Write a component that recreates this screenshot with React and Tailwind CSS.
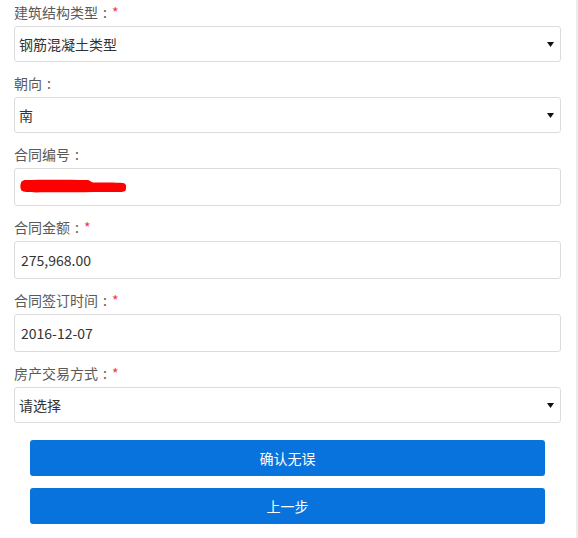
import React from "react";

const font = { fontFamily: '"Noto Sans CJK SC", "Noto Sans", sans-serif' };

function Label({ text, required }) {
  return (
    <div className="h-[20px] leading-[20px] text-[14px] text-[#5a5a5a] mb-[4px] whitespace-nowrap flex items-center">
      <span>{text}</span>
      <span className="inline-block w-[14px] text-center">:</span>
      {required && <span className="text-[#f5334f]">*</span>}
    </div>
  );
}

function Arrow() {
  return (
    <svg width="7" height="5" viewBox="0 0 7 5" className="shrink-0">
      <polygon points="0,0 7,0 3.5,5" fill="#111" />
    </svg>
  );
}

function SelectBox({ value }) {
  return (
    <div className="h-[36px] border border-[#dcdcdc] rounded-[3px] flex items-center pl-[4px] pr-[6px] text-[14px] text-[#333] bg-white">
      <span className="flex-1">{value}</span>
      <Arrow />
    </div>
  );
}

function InputBox({ children }) {
  return (
    <div className="h-[38px] border border-[#dcdcdc] rounded-[3px] flex items-center pl-[6px] text-[14px] text-[#333] bg-white">
      {children}
    </div>
  );
}

function Scribble() {
  return (
    <svg width="107" height="14" viewBox="0 0 107 14" className="-ml-[1px] mb-[3px]">
      <path
        d="M6 1 C20 0.5 45 0.5 68 1 C70 1.5 71 3 73 3.5 C83 3.5 95 3.5 103 4 C106 4.5 106.5 7 106 9.5 C106 12 104.5 13 100 13 C80 13 50 13.3 25 13.3 C12 13.5 4 13.5 1.5 11.5 C0 9.5 0 4 2 2.3 C3 1.5 4.5 1 6 1 Z"
        fill="#ff0000"
      />
    </svg>
  );
}

function Group({ label, required, children, last }) {
  return (
    <div className={last ? "" : "mb-[11px]"}>
      <Label text={label} required={required} />
      {children}
    </div>
  );
}

export default function App() {
  return (
    <div className="flex w-[578px] min-h-[538px] bg-white" style={font}>
      <div className="flex-1 pt-[2px] pl-[14px] pr-[15px]">
        <Group label="建筑结构类型" required>
          <SelectBox value="钢筋混凝土类型" />
        </Group>
        <Group label="朝向">
          <SelectBox value="南" />
        </Group>
        <Group label="合同编号">
          <InputBox>
            <Scribble />
          </InputBox>
        </Group>
        <Group label="合同金额" required>
          <InputBox>275,968.00</InputBox>
        </Group>
        <Group label="合同签订时间" required>
          <InputBox>2016-12-07</InputBox>
        </Group>
        <Group label="房产交易方式" required last>
          <SelectBox value="请选择" />
        </Group>
        <div className="px-[16px] pt-[17px] flex flex-col gap-[12px]">
          <button className="h-[36px] w-full rounded-[3px] bg-[#0873dc] text-white text-[14px]">
            确认无误
          </button>
          <button className="h-[36px] w-full rounded-[3px] bg-[#0873dc] text-white text-[14px]">
            上一步
          </button>
        </div>
      </div>
      <div className="w-[2px] bg-[#ececec]" />
    </div>
  );
}
